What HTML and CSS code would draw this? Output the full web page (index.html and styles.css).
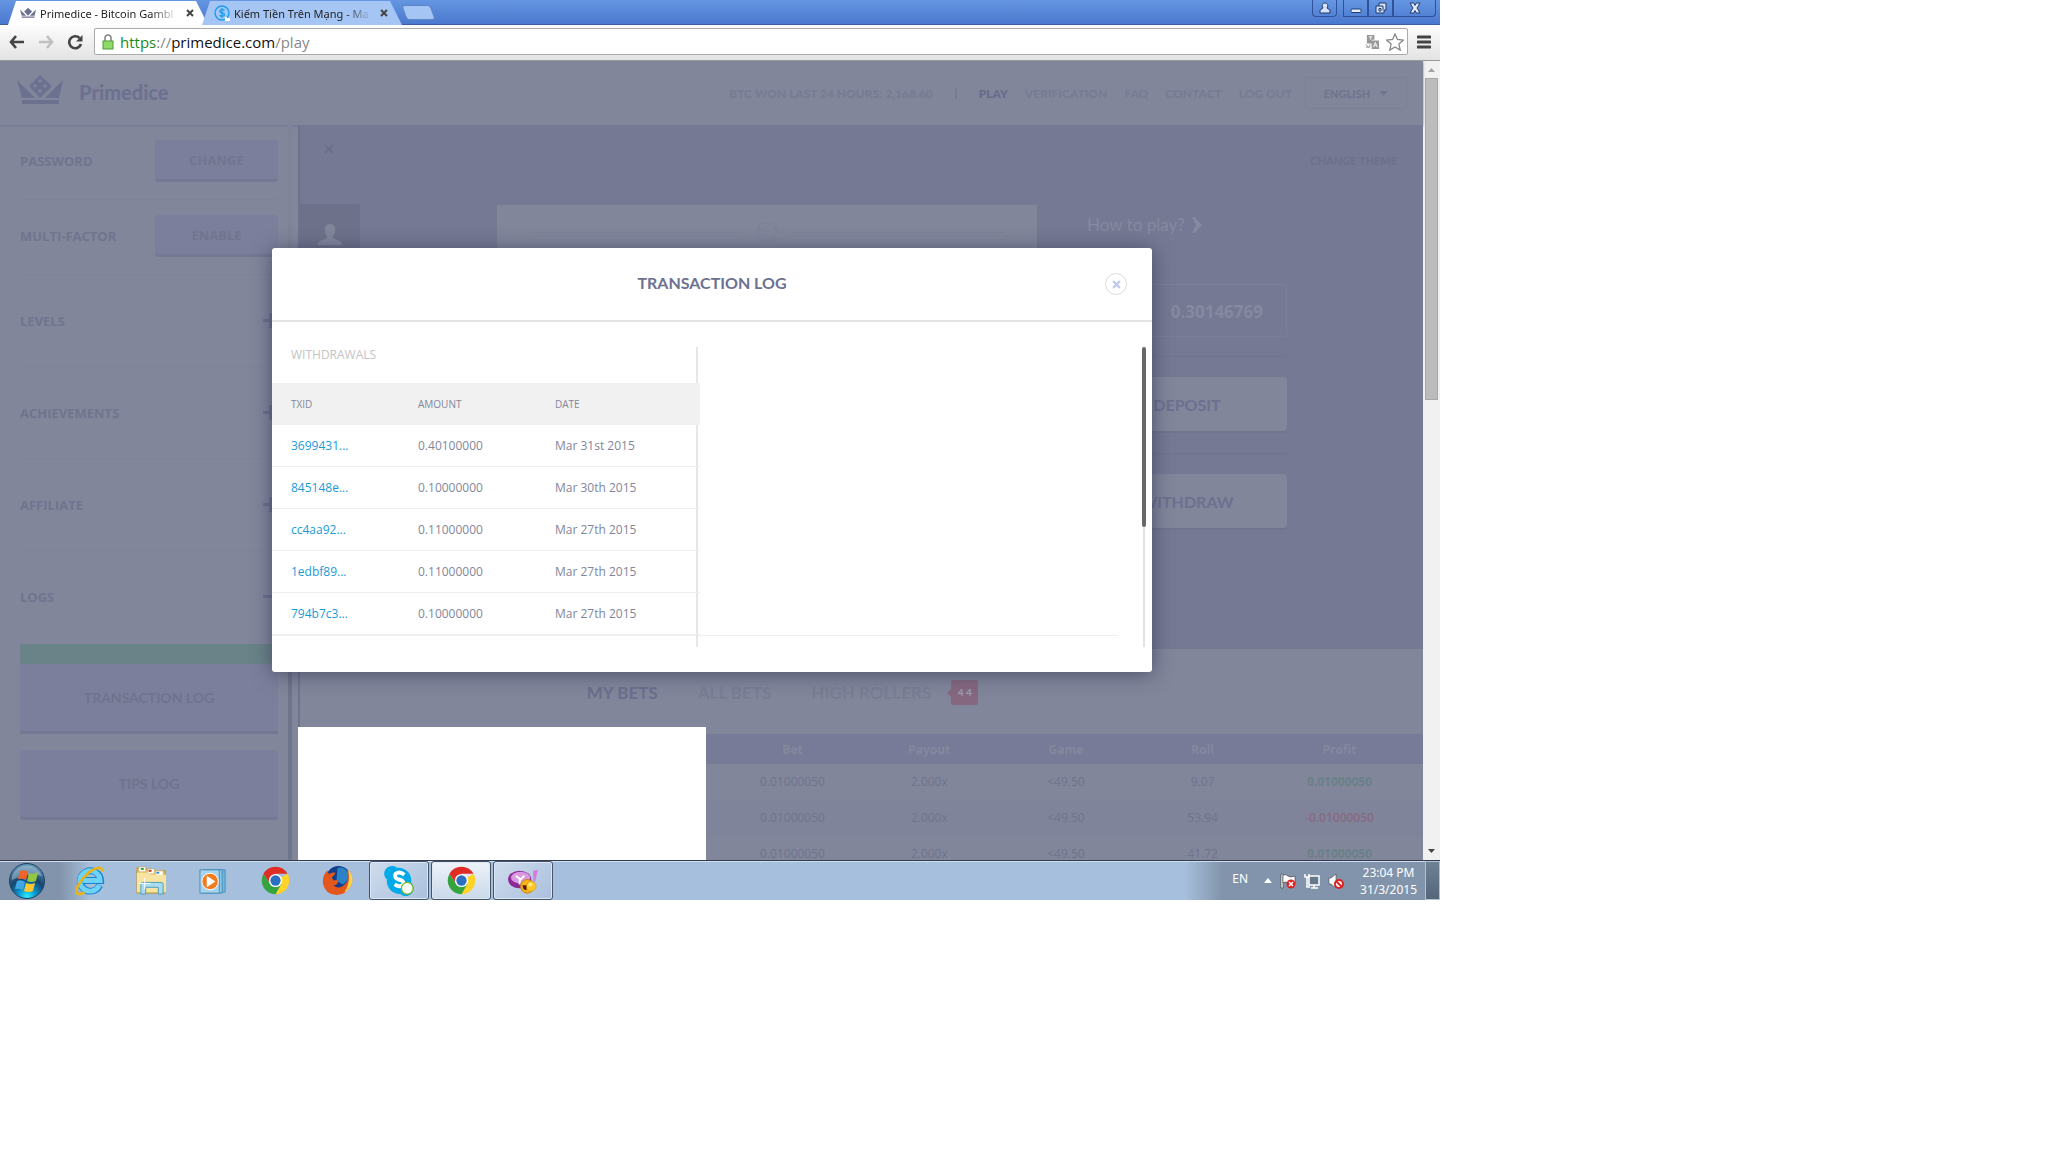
FILE: index.html
```html
<!DOCTYPE html>
<html lang="en">
<head>
  <meta charset="utf-8">
  <title>Primedice - Bitcoin Gambling</title>
  <link rel="stylesheet" href="styles.css">
</head>
<body>
<div class="desktop">

  <!-- browser -->
  <div class="titlebar">
    <div class="tab active">
      <svg class="fav" viewBox="0 0 46 30"><path fill="#6d7190" d="M0 5l18 18H5zM46 5L28 23h14zM23 0l12 11-12 12-11-12zM5 25h37v4H5z"/></svg>
      <span class="tab-name">Primedice - Bitcoin Gambl</span>
      <button class="tab-x" aria-label="Close tab"><svg viewBox="0 0 8 8"><path d="M1 1l6 6M7 1L1 7" stroke="#444" stroke-width="2"/></svg></button>
    </div>
    <div class="tab">
      <svg class="fav" viewBox="0 0 16 16"><circle cx="8" cy="8" r="7" fill="none" stroke="#1a9df0" stroke-width="1.4"/><path d="M10.500 5.500C9 4 5.700 4.500 5.700 6.300c0 2.200 4.800 1.200 4.800 3.400 0 1.800-3.500 2-5 .5M8 3v10" fill="none" stroke="#1a9df0" stroke-width="1.300"/><path fill="#fff" d="M11 12h2v1h3v3h-5z"/></svg>
      <span class="tab-name">Kiếm Tiền Trên Mạng - Ma</span>
      <button class="tab-x" aria-label="Close tab"><svg viewBox="0 0 8 8"><path d="M1 1l6 6M7 1L1 7" stroke="#444" stroke-width="2"/></svg></button>
    </div>
    <button class="new-tab" aria-label="New tab"></button>
    <div class="win-buttons">
      <button class="win user" aria-label="User"><svg viewBox="0 0 12 12"><path d="M4 6C2 3 4 1 6 1s4 2 2 5l3 2v3H1V8z" fill="#d5e2f8" stroke="#1e3a70"/></svg></button>
      <button class="win" aria-label="Minimize"><svg viewBox="0 0 12 12"><rect x="1" y="7" width="10" height="3.500" rx="1" fill="#e6eefb" stroke="#1e3a70"/></svg></button>
      <button class="win" aria-label="Restore"><svg viewBox="0 0 12 12"><path d="M4 1h7v7H9v3H1V4h3z" fill="#d5e2f8" stroke="#1e3a70"/><path d="M4 4h4v4M4 6.500h2V9H4z" fill="none" stroke="#1e3a70"/></svg></button>
      <button class="win close" aria-label="Close"><svg viewBox="0 0 12 12"><path d="M1 1h3.500L6 3.500 7.500 1H11L8 6l3 5H7.500L6 8.500 4.500 11H1l3-5z" fill="#e6eefb" stroke="#1e3a70"/></svg></button>
    </div>
  </div>
  <div class="toolbar">
    <button aria-label="Back"><svg viewBox="0 0 16 14"><path d="M7 1L2 7l5 6M2 7h13" fill="none" stroke="#444" stroke-width="2.600"/></svg></button>
    <button aria-label="Forward"><svg viewBox="0 0 16 14"><path d="M9 1l5 6-5 6M14 7H1" fill="none" stroke="#c0c0c0" stroke-width="2.600"/></svg></button>
    <button aria-label="Reload"><svg viewBox="0 0 16 16"><path d="M12.500 4A6 6 0 1 0 14 10" fill="none" stroke="#444" stroke-width="2.600"/><path d="M15.500 1v6.500H9z" fill="#444"/></svg></button>
    <div class="address">
      <svg class="lock" viewBox="0 0 12 16"><path d="M3 8V4a3 3 0 0 1 6 0v4" fill="none" stroke="#888" stroke-width="1.600"/><rect x="1" y="7" width="10" height="8" fill="#8fdc6a" stroke="#4e9a3a"/></svg>
      <span class="url"><i>https</i><em>://</em>primedice.com<em>/play</em></span>
      <svg class="translate" viewBox="0 0 16 16"><path fill="#999" d="M2 1h8v5H7v4H2zM7 7h8v9H7z"/><path d="M4 3h4M6 3v3M9 14l2-5 2 5M10 12h2" fill="none" stroke="#fff"/><path d="M1 11l3 4M1 14h4v-3" fill="none" stroke="#999"/></svg>
      <svg class="star" viewBox="0 0 18 18"><path d="M9 1l2.400 5.500 6 .6-4.500 4 1.300 6L9 14l-5.200 3.100 1.300-6-4.500-4 6-.6z" fill="#fff" stroke="#888" stroke-width="1.300"/></svg>
    </div>
    <button class="menu" aria-label="Menu"><svg viewBox="0 0 14 14"><path d="M1 2h12M1 7h12M1 12h12" stroke="#444" stroke-width="3" stroke-linecap="round"/></svg></button>
  </div>

  <div class="viewport">
    <div class="page">
      <header class="header">
        <svg class="crown" viewBox="0 0 46 30"><path fill="#6d7190" d="M0 5l18 18H5zM46 5L28 23h14zM23 0l12 11-12 12-11-12zM5 25h37v4H5z"/><g fill="#82869b"><circle cx="23" cy="6" r="1.800"/><circle cx="18" cy="11" r="1.800"/><circle cx="28" cy="11" r="1.800"/><circle cx="23" cy="16" r="1.800"/></g></svg>
        <span class="brand">Primedice</span>
        <span class="won">BTC WON LAST 24 HOURS: 2,168.60</span>
        <span class="bar"></span>
        <nav>
          <a class="on" href="#">PLAY</a>
          <a href="#">VERIFICATION</a>
          <a href="#">FAQ</a>
          <a href="#">CONTACT</a>
          <a href="#">LOG OUT</a>
        </nav>
        <button class="language">ENGLISH <svg viewBox="0 0 10 6"><path d="M0 0h10L5 6z" fill="#70748f"/></svg></button>
      </header>

      <div class="columns">
        <aside class="sidebar">
          <div class="setting"><span>PASSWORD</span><button>CHANGE</button></div>
          <div class="setting"><span>MULTI-FACTOR</span><button>ENABLE</button></div>
          <button class="fold">LEVELS <svg viewBox="0 0 15 15"><path d="M0 7.500h15M7.500 0v15" stroke="#6d7190" stroke-width="3"/></svg></button>
          <button class="fold">ACHIEVEMENTS <svg viewBox="0 0 15 15"><path d="M0 7.500h15M7.500 0v15" stroke="#6d7190" stroke-width="3"/></svg></button>
          <button class="fold">AFFILIATE <svg viewBox="0 0 15 15"><path d="M0 7.500h15M7.500 0v15" stroke="#6d7190" stroke-width="3"/></svg></button>
          <button class="fold open">LOGS <svg viewBox="0 0 15 15"><path d="M0 7.500h15" stroke="#6d7190" stroke-width="3"/></svg></button>
          <button class="log current">TRANSACTION LOG</button>
          <button class="log">TIPS LOG</button>
        </aside>
        <div class="track"><div class="track-thumb"></div></div>

        <main class="main">
          <section class="game">
            <div class="left-tools">
              <button class="hide" aria-label="Hide"><svg viewBox="0 0 10 10"><path d="M1 1l8 8M9 1L1 9" stroke="#686c88" stroke-width="1.600"/></svg></button>
              <div class="avatar"><svg viewBox="0 0 24 21"><path fill="#82869b" d="M12 0c4 0 6 3 5 7 0 2-1 3-2 5v2c3 2 9 2 9 7H0c0-5 6-5 9-7v-2C8 10 7 9 7 7 6 3 8 0 12 0z"/></svg></div>
            </div>
            <div class="card">
              <hr>
              <svg viewBox="0 0 30 26"><path d="M7 1h16l6 11-6 13H7L1 12zM2 9l13 3 13-3M15 12l-2 12M7 1L2 9M23 1l5 8M7 15v4M10 20v3" fill="none" stroke="#7c8097"/><circle cx="12" cy="6" r="1" fill="#7c8097"/><circle cx="17" cy="4" r="1" fill="#7c8097"/><circle cx="21" cy="15" r="1" fill="#7c8097"/><circle cx="19" cy="20" r="1" fill="#7c8097"/></svg>
              <hr>
            </div>
            <div class="wallet">
              <a class="how" href="#">How to play? <svg viewBox="0 0 10 16"><path d="M0 0h3q3 4 7 8-4 4-7 8H0l4-8z" fill="#868aa0"/></svg></a>
              <div class="balance">0.30146769</div>
              <hr>
              <button class="cash">DEPOSIT</button>
              <hr>
              <button class="cash">WITHDRAW</button>
            </div>
            <a class="theme" href="#">CHANGE THEME</a>
          </section>

          <section class="bets">
            <div class="bet-tabs">
              <a class="on" href="#">MY BETS</a>
              <a href="#">ALL BETS</a>
              <a href="#">HIGH ROLLERS</a>
              <span class="badge">4 4</span>
            </div>
            <div class="bet-list">
              <div class="blank"></div>
              <div class="bet-rows">
                <table class="bet-table">
                  <tr><th>Bet</th><th>Payout</th><th>Game</th><th>Roll</th><th>Profit</th></tr>
                  <tr><td>0.01000050</td><td>2.000x</td><td>&lt;49.50</td><td>9.07</td><td class="win-amount">0.01000050</td></tr>
                  <tr><td>0.01000050</td><td>2.000x</td><td>&lt;49.50</td><td>53.94</td><td class="lose-amount">-0.01000050</td></tr>
                  <tr><td>0.01000050</td><td>2.000x</td><td>&lt;49.50</td><td>41.72</td><td class="win-amount">0.01000050</td></tr>
                </table>
              </div>
            </div>
          </section>
        </main>
      </div>

      <!-- transaction log popup -->
      <div class="modal" role="dialog" aria-labelledby="log-title">
        <div class="modal-head">
          <h2 id="log-title">TRANSACTION LOG</h2>
          <button class="modal-x" aria-label="Close"><svg viewBox="0 0 8 8"><path d="M1 1l6 6M7 1L1 7" stroke="#c3caea" stroke-width="2"/></svg></button>
        </div>
        <div class="modal-body">
          <div class="logs">
            <div class="withdrawals">
              <h3>WITHDRAWALS</h3>
              <table class="tx">
                <tr><th>TXID</th><th>AMOUNT</th><th>DATE</th></tr>
                <tr><td><a href="#">3699431...</a></td><td>0.40100000</td><td>Mar 31st 2015</td></tr>
                <tr><td><a href="#">845148e...</a></td><td>0.10000000</td><td>Mar 30th 2015</td></tr>
                <tr><td><a href="#">cc4aa92...</a></td><td>0.11000000</td><td>Mar 27th 2015</td></tr>
                <tr><td><a href="#">1edbf89...</a></td><td>0.11000000</td><td>Mar 27th 2015</td></tr>
                <tr><td><a href="#">794b7c3...</a></td><td>0.10000000</td><td>Mar 27th 2015</td></tr>
              </table>
            </div>
            <div class="deposits"></div>
          </div>
          <div class="log-scroll"><div class="log-thumb"></div></div>
        </div>
      </div>
    </div>

    <div class="scrollbar">
      <svg viewBox="0 0 17 17"><path d="M5 11h7L8.500 7z" fill="#a3a3a3"/></svg>
      <div class="thumb"></div>
      <svg class="down" viewBox="0 0 17 17"><path d="M5 6h7l-3.500 4z" fill="#444"/></svg>
    </div>
  </div>

  <!-- taskbar -->
  <footer class="taskbar">
    <button class="start" aria-label="Start"><svg viewBox="0 0 36 36">
      <defs><radialGradient id="orb" cx=".5" cy=".95" r=".9"><stop offset="0" stop-color="#2ff0ff"/><stop offset=".3" stop-color="#0a8fca"/><stop offset=".6" stop-color="#15456f"/><stop offset="1" stop-color="#5f93b5"/></radialGradient></defs>
      <circle cx="18" cy="18" r="17.500" fill="url(#orb)" stroke="#1d4161"/><path d="M3 13a16 16 0 0 1 30 0q-14-4-30 4z" fill="#fff" opacity=".3"/>
      <path fill="#f0642a" d="M11 8q4-2 8 1l-2 8q-4-2-8-1z"/><path fill="#93c83e" d="M20 10q5 2 9-1l-2 9q-4 2-9 0z"/><path fill="#42a6e3" d="M8 18q4-2 8 1l-2 8q-3-2-8-1z"/><path fill="#ffc82e" d="M17 20q5 2 9 0l-2 8q-4 2-9 0z"/></svg></button>
    <button class="app" aria-label="Internet Explorer"><svg viewBox="0 0 32 32">
      <path fill="none" stroke="#1585cf" stroke-width="7" d="M26.500 21a10.500 10.500 0 1 1 1-5H9"/><path fill="none" stroke="#6fd2f8" stroke-width="5" d="M26 21a10.500 10.500 0 1 1 1-5H9"/><path fill="none" stroke="#e9b512" stroke-width="2.600" d="M29 7c1-6-7-5-14 1S1 24 3 29c1 2 5 1 8-1"/></svg></button>
    <button class="app" aria-label="Explorer"><svg viewBox="0 0 32 32">
      <path d="M1 3h9l2 3h18v23H1z" fill="#e9c96a" stroke="#b98f30"/><path d="M3 2h7v5H3zM12 4h7v5h-7zM20 6h8v5h-8z" fill="#fff" stroke="#c9a951" stroke-width=".600"/><path d="M5 3h3v2H5z" fill="#20a030"/><path d="M13 5h3v2h-3z" fill="#c83820"/><path d="M21 7h3v2h-3z" fill="#3090e0"/><path d="M1 8h12l3 2h15v18H1z" fill="#f6e4a0"/><path d="M5 30V20q0-2 2-2h19q2 0 2 2v10h-5v-7H10v7z" fill="#a8dcf0" stroke="#4a9cc0"/><path d="M9 13v12M3 19h12" stroke="#fff"/></svg></button>
    <button class="app" aria-label="Media Player"><svg viewBox="0 0 32 32">
      <path d="M8 5h20v23H8z" fill="#71b7df" stroke="#4591bd"/><path d="M5 5h20v24H5z" fill="#8cc6e4" stroke="#4591bd"/><path d="M2 5h20v24H2z" fill="#a8d3ec" stroke="#4591bd"/><circle cx="12.500" cy="17" r="8.500" fill="#f47b1c" stroke="#fff"/><path d="M9 11l9 6-9 6z" fill="#fff"/></svg></button>
    <button class="app" aria-label="Chrome"><svg viewBox="0 0 32 32">
      <path d="M16 16L28.400 9A14.200 14.200 0 0 1 16 30.200z" fill="#ffd328"/><path d="M22 19.500L16 30.200A14.200 14.200 0 0 1 3.600 9l6 9 6 4z" fill="#36a43e"/><path d="M16 9h12.400a14.200 14.200 0 0 0-24.800 0l6 9z" fill="#df2c24"/><circle cx="16" cy="16" r="6.800" fill="#fff"/><circle cx="16" cy="16" r="5.300" fill="#2a6fc0"/></svg></button>
    <button class="app" aria-label="Firefox"><svg viewBox="0 0 32 32">
      <circle cx="17" cy="14" r="13" fill="#123f87"/><path d="M16 3q7-2 11 5 2 9-6 12l-6-4z" fill="#2b82c8"/><path d="M26 4q8 9 4 17-5 10-15 10Q3 30 1 19q-1-8 5-14-1 4 2 4 3-2 6-1-1 3-4 5l2 3q3-1 5 0-1 5-5 5 4 4 9 1 7-4 6-12z" fill="#e3571d"/><path d="M27 5q7 8 3 16-2 5-7 7 7-10 4-23z" fill="#ffd34a"/></svg></button>
    <button class="app running" aria-label="Skype"><svg viewBox="0 0 32 32">
      <path d="M8 1a8 8 0 0 1 6 2A13 13 0 0 1 28 18a8 8 0 0 1-11 12A13.500 13.500 0 0 1 3 15 8 8 0 0 1 8 1z" fill="#00a9e8"/><path d="M21 10q-5-4-9-1-2 4 3 6 6 1 5 5-3 4-9 0" fill="none" stroke="#fff" stroke-width="4"/><circle cx="24" cy="24" r="6" fill="#fff" stroke="#7fb82a" stroke-width="1.300"/></svg></button>
    <button class="app running front" aria-label="Chrome window"><svg viewBox="0 0 32 32">
      <path d="M16 16L28.400 9A14.200 14.200 0 0 1 16 30.200z" fill="#ffd328"/><path d="M22 19.500L16 30.200A14.200 14.200 0 0 1 3.600 9l6 9 6 4z" fill="#36a43e"/><path d="M16 9h12.400a14.200 14.200 0 0 0-24.800 0l6 9z" fill="#df2c24"/><circle cx="16" cy="16" r="6.800" fill="#fff"/><circle cx="16" cy="16" r="5.300" fill="#2a6fc0"/></svg></button>
    <button class="app running" aria-label="Yahoo Messenger"><svg viewBox="0 0 32 32">
      <ellipse cx="12" cy="15" rx="12" ry="9" fill="#8e2a98"/><ellipse cx="13" cy="13" rx="10" ry="6" fill="#d998e0"/><path d="M8 11l5 4 4-4M12 15v5" fill="none" stroke="#fff" stroke-width="2"/><path d="M26 6l5-1-3 12h-2z" fill="#d37be0"/><circle cx="20" cy="22" r="7" fill="#f7b51a" stroke="#c67d05"/><circle cx="24" cy="22" r="5" fill="#ffc928" stroke="#d89210" stroke-width=".600"/><circle cx="23" cy="20" r="2" fill="#ffee90"/><path d="M15 21h4v5q-4 0-4-5z" fill="#5a1a10"/></svg></button>

    <div class="tray">
      <span class="lang">EN</span>
      <svg class="up" viewBox="0 0 8 5"><path d="M0 5h8L4 0z" fill="#fff"/></svg>
      <svg viewBox="0 0 16 16"><path d="M1 1h2v14H1z" fill="#fff" stroke="#333" stroke-width=".600"/><path d="M3 2q3-1 5 1t7 0v7q-4 2-7 0t-5 0z" fill="#fff" stroke="#333" stroke-width=".600"/><circle cx="11" cy="11" r="4.500" fill="#dc2222"/><path d="M9 9l4 4M13 9l-4 4" stroke="#fff" stroke-width="1.500"/></svg>
      <svg viewBox="0 0 16 16"><path d="M5 3h10v9H5z" fill="#66788c" stroke="#fff" stroke-width="1.500"/><path d="M7 15h7M10 12v3M1 1v3h4V1M3 4v10h3" fill="none" stroke="#fff" stroke-width="1.500"/></svg>
      <svg viewBox="0 0 16 16"><path d="M1 5h2l5-4v14l-5-4H1z" fill="#fff" stroke="#444" stroke-width=".600"/><circle cx="11" cy="11" r="4" fill="#fff" stroke="#dc2222" stroke-width="2"/><path d="M8 8l6 6" stroke="#dc2222" stroke-width="2"/></svg>
      <div class="clock">23:04 PM<br>31/3/2015</div>
      <button class="show-desktop" aria-label="Show desktop"></button>
    </div>
  </footer>
</div>
</body>
</html>
```
FILE: styles.css
```css
* {
  box-sizing: border-box;
}

body {
  margin: 0;
  background: #fff;
  font-family: "Open Sans", sans-serif;
  font-size: 12px;
}

button {
  margin: 0;
  padding: 0;
  border: 0;
  background: none;
  font-family: inherit;
  cursor: pointer;
}

a {
  text-decoration: none;
}

svg {
  display: block;
  flex: none;
}

table {
  border-spacing: 0;
  table-layout: fixed;
}

hr {
  margin: 0;
  border: 0;
  border-top: 1px solid #70748f;
}

.desktop {
  max-width: 1440px;
}

/* browser */
.titlebar {
  display: flex;
  height: 25px;
  padding-left: 8px;
  background: linear-gradient(#6596e1, #4a78cf);
  border-bottom: 1px solid #3c5f9f;
}

.tab {
  display: flex;
  align-items: center;
  width: 200px;
  height: 24px;
  margin-top: 1px;
  margin-right: -6px;
  padding: 0 10px 0 12px;
  gap: 4px;
  background: #a5c6f4;
  clip-path: polygon(8px 0, 188px 0, 200px 100%, 0 100%);
}

.tab.active {
  background: #fff;
}

.tab .fav {
  width: 16px;
  height: 16px;
}

.tab-name {
  flex: 1;
  overflow: hidden;
  white-space: nowrap;
  font-family: "Noto Sans", sans-serif;
  font-size: 11px;
  color: #222;
  mask-image: linear-gradient(to right, #000 80%, transparent);
}

.tab-x {
  padding: 0 4px;
}

.tab-x svg {
  width: 8px;
  height: 8px;
}

.new-tab {
  width: 29px;
  height: 15px;
  margin: 5px 0 0 8px;
  background: #a5c6f4;
  border: 1px solid #5f86c4;
  border-radius: 3px;
  transform: skewX(20deg);
}

.win-buttons {
  display: flex;
  height: 17px;
  margin-left: auto;
  padding-right: 4px;
}

.win {
  display: flex;
  align-items: center;
  justify-content: center;
  width: 25px;
  border: 1px solid #2f529a;
  border-top: 0;
}

.win svg {
  width: 12px;
  height: 12px;
}

.win.user {
  margin-right: 6px;
  border-radius: 0 0 4px 4px;
}

.win.close {
  width: 43px;
  border-radius: 0 0 4px 0;
}

.toolbar {
  display: flex;
  align-items: center;
  height: 36px;
  padding: 0 9px 2px 9px;
  gap: 13px;
  background: linear-gradient(#fdfdfd, #e3e3e3);
  border-bottom: 1px solid #999;
}

.toolbar button svg {
  width: 16px;
  height: 16px;
}

.toolbar .menu svg {
  width: 14px;
  height: 14px;
}

.toolbar .menu {
  margin-left: -4px;
}

.address {
  flex: 1;
  display: flex;
  align-items: center;
  gap: 6px;
  height: 27px;
  margin-left: -2px;
  padding: 0 3px 0 7px;
  background: #fff;
  border: 1px solid #aaa;
  border-radius: 2px;
}

.lock {
  width: 12px;
  height: 16px;
}

.url {
  flex: 1;
  font-family: "Open Sans", sans-serif;
  font-size: 15px;
  color: #111;
}

.url i {
  font-style: normal;
  color: #1a8a1a;
}

.url em {
  font-style: normal;
  color: #888;
}

.translate {
  width: 15px;
  height: 15px;
}

.star {
  width: 18px;
  height: 18px;
}

.viewport {
  display: flex;
  height: 799px;
  overflow: hidden;
}

.page {
  position: relative;
  flex: 1;
  background: #82869b;
  color: #6d7190;
}

.scrollbar {
  display: flex;
  flex-direction: column;
  width: 17px;
  background: #f1f1f1;
}

.scrollbar svg {
  width: 17px;
  height: 17px;
}

.thumb {
  height: 322px;
  margin: 0 2px;
  background: #bcbcbc;
  border: 1px solid #a8a8a8;
}

.down {
  margin-top: auto;
}

/* page header */
.header {
  display: flex;
  align-items: center;
  height: 64px;
  padding: 0 16px 0 17px;
  font-family: Lato, sans-serif;
  font-size: 12px;
  font-weight: 900;
  color: #777b93;
  box-shadow: 0 1px 2px #70748f;
}

.crown {
  width: 46px;
  height: 30px;
  margin-bottom: 6px;
}

.brand {
  margin-left: 16px;
  padding-bottom: 2px;
  font-size: 20px;
  color: #6d7190;
}

.won {
  margin-left: auto;
}

.bar {
  width: 2px;
  height: 11px;
  margin: 0 22px;
  background: #777b93;
}

nav {
  display: flex;
  gap: 17px;
}

nav a {
  color: #777b93;
}

nav a.on {
  color: #676b89;
}

.language {
  display: flex;
  align-items: center;
  justify-content: center;
  gap: 9px;
  width: 102px;
  height: 32px;
  margin-left: 13px;
  border: 1px solid #7d8197;
  border-radius: 4px;
  font-size: 11px;
  font-weight: 900;
  color: #70748f;
}

.language svg {
  width: 9px;
  height: 5px;
}

.columns {
  display: flex;
  height: 735px;
}

/* sidebar */
.sidebar {
  width: 288px;
  padding: 0 10px 0 20px;
}

.setting,
.fold {
  display: flex;
  align-items: center;
  justify-content: space-between;
  width: 100%;
  border-bottom: 1px solid #7f8398;
  font-size: 13px;
  font-weight: 700;
  color: #70748e;
}

.setting {
  height: 75px;
  padding-bottom: 2px;
}

.fold {
  height: 92px;
}

.fold.open {
  height: 93px;
  padding-bottom: 2px;
  border-bottom: 0;
}

.fold svg {
  width: 15px;
  height: 15px;
}

.setting button {
  width: 123px;
  height: 42px;
  background: #7b7f9b;
  border-bottom: 3px solid #747893;
  border-radius: 3px;
  font-size: 13px;
  font-weight: 700;
  color: #71758f;
}

.log {
  display: block;
  width: 100%;
  height: 70px;
  margin-bottom: 16px;
  background: #7b7f9b;
  border-bottom: 3px solid #747893;
  border-radius: 3px;
  font-family: Lato, sans-serif;
  font-size: 14px;
  font-weight: 700;
  color: #6f738e;
}

.log.current {
  height: 90px;
  border-top: 20px solid #698388;
  border-radius: 0;
}

.track {
  display: flex;
  align-items: flex-end;
  width: 4px;
  margin-right: 6px;
  background: #7f8399;
}

.track-thumb {
  width: 4px;
  height: 400px;
  background: #6f738b;
  border-radius: 2px;
}

.main {
  flex: 1;
  border-left: 2px solid #6f738e;
}

.game {
  display: flex;
  height: 524px;
  background: #757994;
}

.left-tools {
  width: 197px;
}

.hide {
  display: block;
  margin: 19px 0 0 24px;
}

.hide svg {
  width: 10px;
  height: 10px;
}

.avatar {
  display: flex;
  justify-content: center;
  width: 60px;
  height: 60px;
  margin-top: 50px;
  padding-top: 20px;
  background: #6d718a;
  border-radius: 0 3px 3px 0;
}

.avatar svg {
  width: 24px;
  height: 21px;
}

.card {
  display: flex;
  align-items: flex-start;
  gap: 14px;
  width: 540px;
  margin-top: 80px;
  padding: 14px 33px;
  background: #82869b;
}

.card svg {
  width: 22px;
  height: 26px;
}

.card hr {
  flex: 1;
  margin-top: 13px;
  border-color: #7d8197;
}

.wallet {
  width: 200px;
  margin-left: 50px;
  padding-top: 86px;
}

.how {
  display: flex;
  align-items: center;
  gap: 7px;
  height: 27px;
  font-family: Lato, sans-serif;
  font-size: 17px;
  color: #868aa0;
}

.how svg {
  width: 10px;
  height: 16px;
}

.balance {
  height: 53px;
  margin: 46px 0 19px;
  padding-right: 23px;
  border: 1px dotted #82869f;
  border-radius: 3px;
  font-size: 17px;
  font-weight: 700;
  line-height: 53px;
  text-align: right;
  color: #868aa0;
}

.cash {
  display: block;
  width: 100%;
  height: 54px;
  margin: 20px 0 22px;
  background: #82869b;
  border-radius: 4px;
  box-shadow: 0 2px #70748f;
  font-family: Lato, sans-serif;
  font-size: 16px;
  font-weight: 700;
  color: #6d7190;
}

.theme {
  margin: 29px 26px 0 auto;
  font-family: Lato, sans-serif;
  font-size: 11px;
  font-weight: 700;
  color: #6c708b;
}

.bet-tabs {
  display: flex;
  align-items: center;
  justify-content: center;
  gap: 40px;
  height: 78px;
  padding: 8px 158px 0 0;
  font-family: Lato, sans-serif;
  font-size: 17px;
  font-weight: 700;
}

.bet-tabs a {
  color: #797d94;
}

.bet-tabs a.on {
  color: #6b6f8d;
}

.badge {
  position: relative;
  width: 27px;
  height: 25px;
  margin-left: -20px;
  background: #856880;
  border-radius: 2px;
  font-size: 10px;
  line-height: 25px;
  text-align: center;
  color: #9da0b0;
}

.badge::before {
  content: "";
  position: absolute;
  top: 9px;
  left: -4px;
  border: 4px solid transparent;
  border-left: 0;
  border-right-color: #856880;
}

.bet-list {
  display: flex;
  height: 133px;
}

.blank {
  width: 408px;
  margin-left: -2px;
  background: #fff;
}

.bet-rows {
  flex: 1;
  padding-top: 7px;
}

.bet-table {
  width: 100%;
  text-align: center;
  color: #6f738d;
}

.bet-table th {
  height: 30px;
  padding: 0;
  background: #777b97;
  color: #84889e;
}

.bet-table td {
  height: 36px;
  padding: 0 0 2px;
}

.bet-table tr:nth-child(odd) td {
  background: #80849a;
}

.bet-table th:first-child,
.bet-table td:first-child {
  width: 155px;
  padding-left: 18px;
}

.bet-table th:last-child,
.bet-table td:last-child {
  width: 152px;
  padding-right: 15px;
}

.bet-table .win-amount {
  font-weight: 700;
  color: #698087;
}

.bet-table .lose-amount {
  font-weight: 600;
  color: #866a82;
}

/* transaction log popup */
.modal {
  position: absolute;
  top: 187px;
  left: 272px;
  right: 271px;
  height: 424px;
  background: #fff;
  border-radius: 3px;
  box-shadow: 0 2px 20px rgba(40, 44, 70, 0.6);
}

.modal-head {
  position: relative;
  height: 74px;
  border-bottom: 2px solid #e4e4e4;
  text-align: center;
}

.modal-head h2 {
  margin: 0;
  font-family: Lato, sans-serif;
  font-size: 16px;
  font-weight: 700;
  line-height: 70px;
  color: #6d7190;
}

.modal-x {
  position: absolute;
  top: 25px;
  right: 25px;
  display: flex;
  align-items: center;
  justify-content: center;
  width: 22px;
  height: 22px;
  border: 1px solid #ddd;
  border-radius: 50%;
}

.modal-x svg {
  width: 9px;
  height: 9px;
}

.modal-body {
  display: flex;
  height: 300px;
  margin-top: 25px;
}

.logs {
  display: flex;
  flex: 1;
  height: 289px;
  margin-right: 24px;
  border-bottom: 1px solid #eee;
}

.withdrawals {
  width: 426px;
  height: 300px;
  border-right: 2px solid #e6e6e6;
}

.withdrawals h3 {
  height: 36px;
  margin: 0;
  padding-left: 19px;
  font-size: 12px;
  font-weight: 400;
  line-height: 15px;
  color: #c4c4c4;
}

.tx {
  width: 428px;
  text-align: left;
  color: #82869b;
}

.tx th,
.tx td {
  height: 42px;
  padding: 0;
}

.tx td {
  border-bottom: 1px solid #eee;
}

.tx th {
  background: #f1f1f1;
  font-size: 10px;
  font-weight: 400;
}

.tx th:first-child {
  width: 146px;
}

.tx th:first-child,
.tx td:first-child {
  padding-left: 19px;
}

.tx th:nth-child(2) {
  width: 137px;
}

.tx a {
  color: #1a9bd7;
}

.log-scroll {
  width: 4px;
  margin-right: 6px;
  background: linear-gradient(to right, #fff 1px, #e2e2e2 1px, #e2e2e2 3px, #fff 3px);
}

.log-thumb {
  height: 180px;
  background: #686868;
  border-radius: 2px;
}

/* taskbar */
.taskbar {
  display: flex;
  height: 40px;
  padding-left: 9px;
  background: linear-gradient(to right, #8294ab 60px, #a6bfdc 90px, #a6bfdc 1185px, #8294ab 1222px);
  border-top: 1px solid #333c50;
  box-shadow: inset 0 1px #d0dff0;
}

.start svg {
  width: 36px;
  height: 36px;
}

.start {
  width: 50px;
}

.app {
  display: flex;
  align-items: center;
  justify-content: center;
  width: 60px;
  margin-right: 2px;
}

.app svg {
  width: 31px;
  height: 31px;
}

.app.running {
  border: 1px solid #46546a;
  border-radius: 3px;
  background: linear-gradient(135deg, #cfdced, #a9c0dd);
  box-shadow: inset 0 0 0 1px #dce7f3;
}

.app.front {
  background: linear-gradient(#eef3f9, #c9d8ea);
}

.tray {
  display: flex;
  align-items: center;
  gap: 8px;
  margin-left: auto;
  color: #fff;
  font-family: "Noto Sans", sans-serif;
}

.tray svg {
  width: 16px;
  height: 16px;
}

.tray .up {
  width: 8px;
  height: 5px;
}

.lang {
  margin-right: 8px;
  padding-bottom: 4px;
}

.clock {
  margin-left: 8px;
  line-height: 17px;
  text-align: center;
}

.show-desktop {
  width: 15px;
  height: 39px;
  background: linear-gradient(#6f8195, #55667a);
  border: 1px solid #b4c1d0;
}
```
